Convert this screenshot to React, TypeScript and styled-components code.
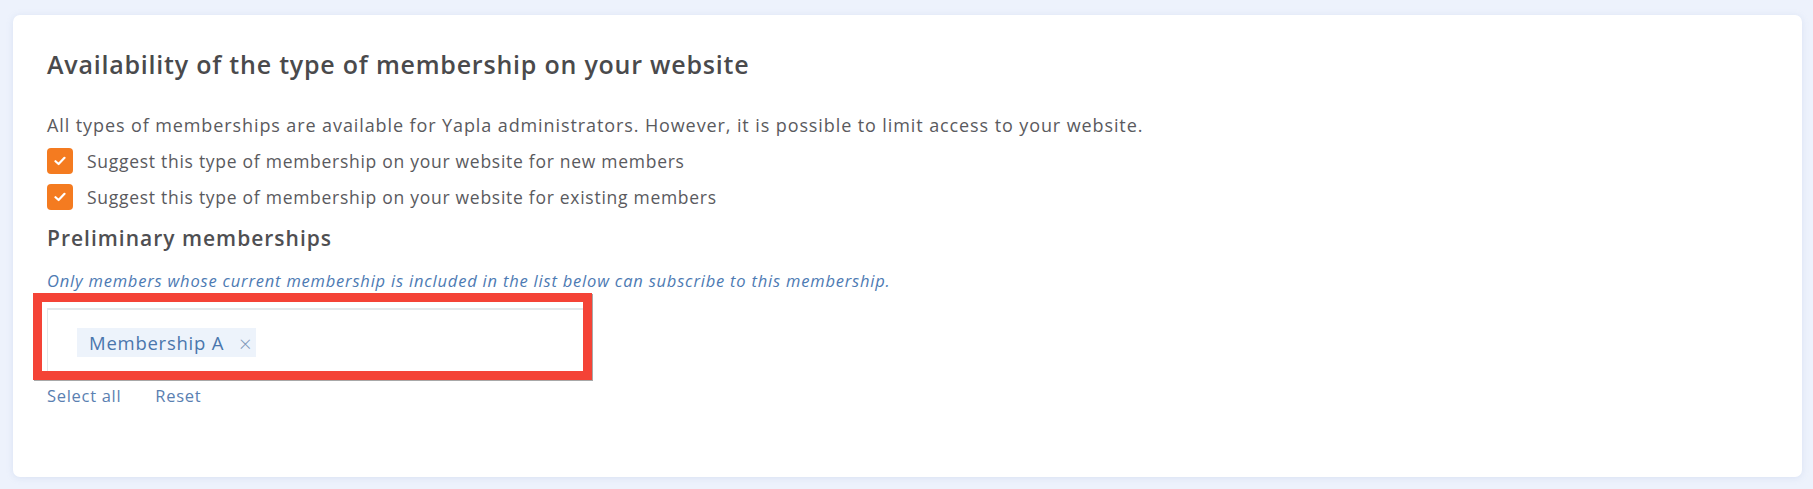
import React from "react";
import styled, { createGlobalStyle } from "styled-components";

const Global = createGlobalStyle`
  html, body { margin: 0; padding: 0; }
  body {
    background: #edf2fc;
    font-family: "Open Sans", "Noto Sans", sans-serif;
    -webkit-font-smoothing: antialiased;
  }
`;

const Page = styled.div`
  padding: 15px 11px 12px 13px;
  min-height: 489px;
  box-sizing: border-box;
`;

const Card = styled.section`
  background: #ffffff;
  border-radius: 7px;
  box-shadow: 0 1px 6px rgba(160, 180, 220, 0.25);
  padding: 34px 34px 71px 34px;
  height: 462px;
  box-sizing: border-box;
  display: flex;
  flex-direction: column;
  align-items: flex-start;
`;

const Title = styled.h2`
  margin: 0;
  font-size: 25px;
  line-height: 30px;
  font-weight: 600;
  color: #4a4a4c;
  letter-spacing: 0.78px;
`;

const Para = styled.p`
  margin: 33px 0 0 0;
  font-size: 18px;
  line-height: 26px;
  color: #5a5a5e;
  letter-spacing: 0.9px;
`;

const CheckList = styled.div`
  margin-top: 8px;
  display: flex;
  flex-direction: column;
  gap: 6px;
`;

const CheckRow = styled.label`
  display: flex;
  align-items: center;
  gap: 14px;
  height: 30px;
  font-size: 17.5px;
  color: #5a5a5e;
  letter-spacing: 0.72px;
`;

const Box = styled.span<{ $checked: boolean }>`
  width: 26px;
  height: 26px;
  border-radius: 4px;
  background: ${(p) => (p.$checked ? "#f47b20" : "#fff")};
  display: inline-flex;
  align-items: center;
  justify-content: center;
  flex: none;
`;

const SubTitle = styled.h3`
  margin: 12px 0 0 0;
  font-size: 21px;
  line-height: 28px;
  font-weight: 600;
  color: #4f4f52;
  letter-spacing: 1px;
`;

const Hint = styled.p`
  margin: 18px 0 0 0;
  font-size: 16.5px;
  line-height: 22px;
  font-style: italic;
  color: #4d7ab3;
  letter-spacing: 0.8px;
`;

const FieldWrap = styled.div`
  position: relative;
  margin-top: 16px;
`;

const Field = styled.div`
  width: 543px;
  height: 68px;
  box-sizing: border-box;
  border: 1px solid #e3e7ea;
  border-top-width: 2px;
  background: #fff;
  padding: 18px 0 0 29px;
  display: flex;
  align-items: flex-start;
`;

const Highlight = styled.div`
  position: absolute;
  left: -14px;
  top: -15px;
  right: -2px;
  bottom: -4px;
  border: 9px solid #f44336;
  box-shadow: 1px 1px 0 #a8a8a8;
  pointer-events: none;
`;

const Chip = styled.span`
  display: inline-flex;
  align-items: center;
  gap: 15px;
  height: 29px;
  padding: 0 4px 0 12px;
  background: #edf3fb;
  color: #4a76ad;
  font-size: 18.5px;
  letter-spacing: 0.75px;
`;

const ChipClose = styled.span`
  font-size: 22px;
  font-weight: 300;
  color: #7f98b8;
  line-height: 1;
  letter-spacing: 0;
`;

const Links = styled.div`
  margin-top: 10px;
  display: flex;
  gap: 34px;
`;

const LinkBtn = styled.button`
  border: none;
  background: none;
  padding: 0;
  font-family: inherit;
  font-size: 16.5px;
  line-height: 20px;
  color: #5a80b1;
  letter-spacing: 0.7px;
  cursor: pointer;
`;

const Check = () => (
  <svg width="12" height="10" viewBox="0 0 12 10" aria-hidden="true">
    <path
      d="M1.5 5.2 L4.6 8 L10.5 1.8"
      fill="none"
      stroke="#fff"
      strokeWidth="2.2"
      strokeLinecap="round"
      strokeLinejoin="round"
    />
  </svg>
);

export default function App() {
  return (
    <>
      <Global />
      <Page>
        <Card>
          <Title>Availability of the type of membership on your website</Title>
          <Para>
            All types of memberships are available for Yapla administrators. However, it is possible to limit access to your website.
          </Para>
          <CheckList>
            <CheckRow>
              <Box $checked>
                <Check />
              </Box>
              Suggest this type of membership on your website for new members
            </CheckRow>
            <CheckRow>
              <Box $checked>
                <Check />
              </Box>
              Suggest this type of membership on your website for existing members
            </CheckRow>
          </CheckList>
          <SubTitle>Preliminary memberships</SubTitle>
          <Hint>Only members whose current membership is included in the list below can subscribe to this membership.</Hint>
          <FieldWrap>
            <Field>
              <Chip>
                Membership A<ChipClose>×</ChipClose>
              </Chip>
            </Field>
            <Highlight />
          </FieldWrap>
          <Links>
            <LinkBtn>Select all</LinkBtn>
            <LinkBtn>Reset</LinkBtn>
          </Links>
        </Card>
      </Page>
    </>
  );
}
